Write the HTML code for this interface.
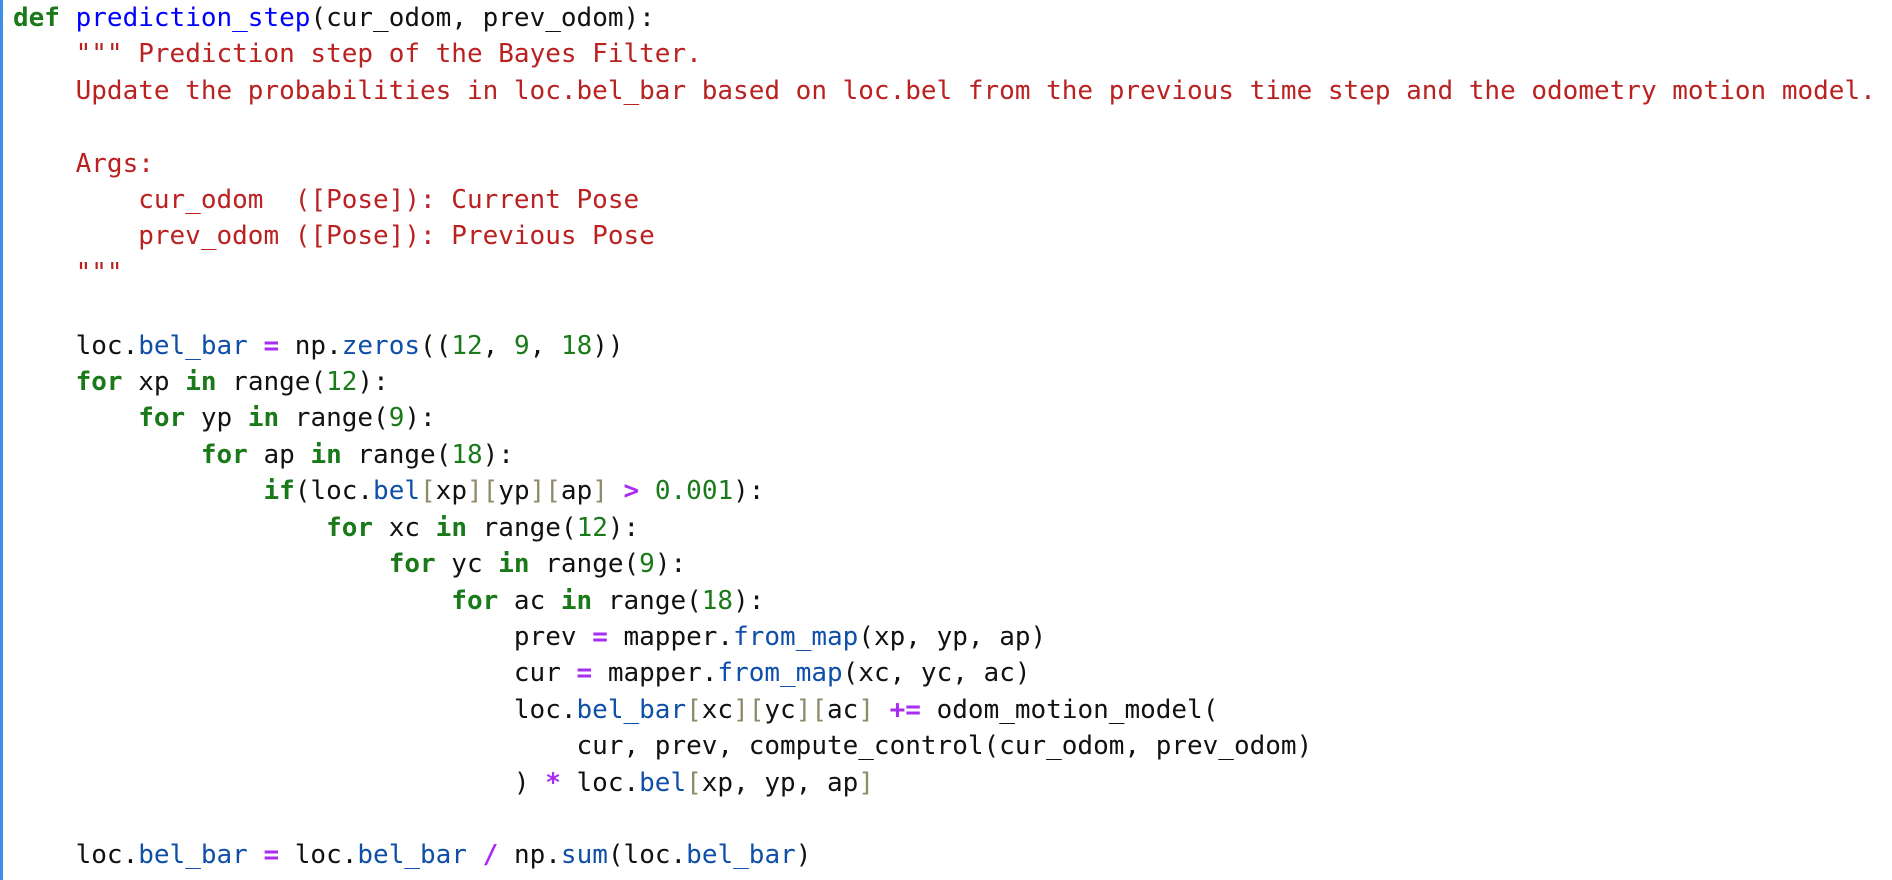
<!DOCTYPE html><html><head><style>
body{margin:0;width:1892px;height:880px;background:#fff;overflow:hidden;position:relative}
.bar{position:absolute;left:0;top:0;width:3px;height:880px;background:#3d8ee6}
pre{margin:0;position:absolute;left:13px;top:0;font-family:"DejaVu Sans Mono","Liberation Mono",monospace;font-size:26px;line-height:36.4px;color:#111;letter-spacing:0px}
.k{color:#1a7a1a;font-weight:bold}.f{color:#0000ff}.s{color:#ba2121}.n{color:#1a7a1a}.o{color:#a92cf2;font-weight:bold}.a{color:#0f4fa8}.b{color:#8f8a6a}
</style></head><body><div class="bar"></div><pre><span class="k">def</span> <span class="f">prediction_step</span>(cur_odom, prev_odom):
    <span class="s">""" Prediction step of the Bayes Filter.
    Update the probabilities in loc.bel_bar based on loc.bel from the previous time step and the odometry motion model.

    Args:
        cur_odom  ([Pose]): Current Pose
        prev_odom ([Pose]): Previous Pose
    """</span>

    loc.<span class="a">bel_bar</span> <span class="o">=</span> np.<span class="a">zeros</span>((<span class="n">12</span>, <span class="n">9</span>, <span class="n">18</span>))
    <span class="k">for</span> xp <span class="k">in</span> range(<span class="n">12</span>):
        <span class="k">for</span> yp <span class="k">in</span> range(<span class="n">9</span>):
            <span class="k">for</span> ap <span class="k">in</span> range(<span class="n">18</span>):
                <span class="k">if</span>(loc.<span class="a">bel</span><span class="b">[</span>xp<span class="b">][</span>yp<span class="b">][</span>ap<span class="b">]</span> <span class="o">&gt;</span> <span class="n">0.001</span>):
                    <span class="k">for</span> xc <span class="k">in</span> range(<span class="n">12</span>):
                        <span class="k">for</span> yc <span class="k">in</span> range(<span class="n">9</span>):
                            <span class="k">for</span> ac <span class="k">in</span> range(<span class="n">18</span>):
                                prev <span class="o">=</span> mapper.<span class="a">from_map</span>(xp, yp, ap)
                                cur <span class="o">=</span> mapper.<span class="a">from_map</span>(xc, yc, ac)
                                loc.<span class="a">bel_bar</span><span class="b">[</span>xc<span class="b">][</span>yc<span class="b">][</span>ac<span class="b">]</span> <span class="o">+=</span> odom_motion_model(
                                    cur, prev, compute_control(cur_odom, prev_odom)
                                ) <span class="o">*</span> loc.<span class="a">bel</span><span class="b">[</span>xp, yp, ap<span class="b">]</span>

    loc.<span class="a">bel_bar</span> <span class="o">=</span> loc.<span class="a">bel_bar</span> <span class="o">/</span> np.<span class="a">sum</span>(loc.<span class="a">bel_bar</span>)
</pre></body></html>
